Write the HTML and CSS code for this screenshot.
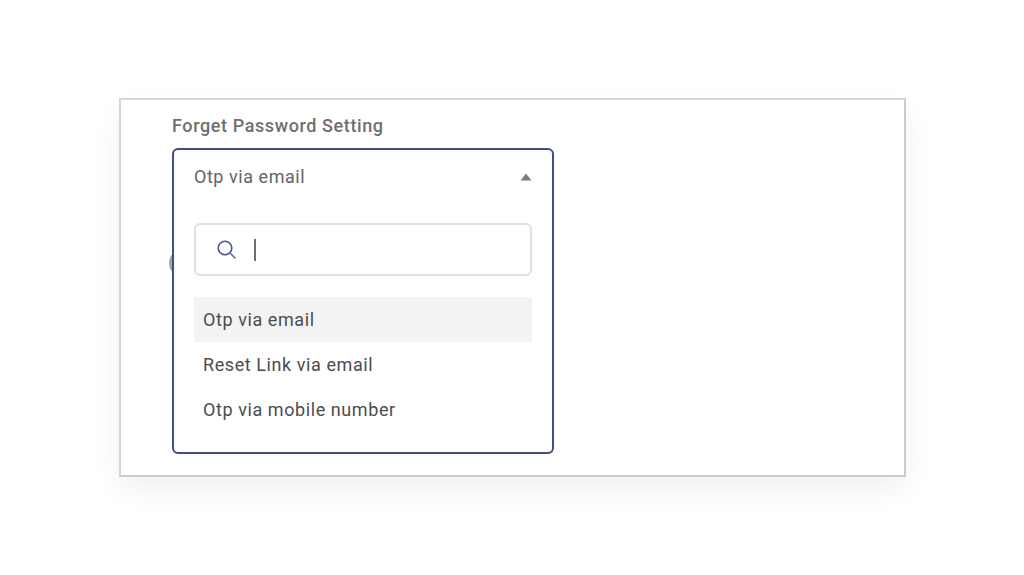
FILE: index.html
```html
<!DOCTYPE html>
<html lang="en">
<head>
<meta charset="utf-8">
<title>Forget Password Setting</title>
<link rel="stylesheet" href="styles.css">
</head>
<body>
<main class="card">
  <label class="label">Forget Password Setting</label>
  <div class="field">
    <span class="peek"></span>
    <div class="dropdown">
      <div class="selected">
        <span>Otp via email</span>
        <svg class="caret" width="12" height="8" viewBox="0 0 12 8"><path d="M6 0.5 L11.5 7.5 H0.5 Z" fill="#7d7d7d"/></svg>
      </div>
      <div class="search">
        <svg class="search-icon" width="22" height="22" viewBox="0 0 22 22" fill="none" stroke="#4a5390" stroke-width="1.6"><circle cx="9" cy="9" r="6.8"/><path d="M14 14 L19.5 19.5" stroke="#6a6f96"/></svg>
        <span class="cursor"></span>
      </div>
      <ul class="options">
        <li class="option active">Otp via email</li>
        <li class="option">Reset Link via email</li>
        <li class="option">Otp via mobile number</li>
      </ul>
    </div>
  </div>
</main>
</body>
</html>
```
FILE: styles.css
```css
* { box-sizing: border-box; }
html, body { margin: 0; height: 100%; background: #fff; overflow: hidden; }
body {
  padding: 98px 0 0 119px;
  font-family: Roboto, "Liberation Sans", sans-serif;
}
.card {
  width: 787px;
  height: 379px;
  border: 2px solid #d6d6d6;
  border-right-color: #cbcbcb;
  border-bottom-color: #cbcbcb;
  background: #fff;
  padding: 14px 0 0 51px;
  box-shadow: 0 12px 26px rgba(0,0,0,0.06);
}
.label {
  display: block;
  font-size: 18px;
  line-height: 24px;
  font-weight: 500;
  letter-spacing: 0.6px;
  color: #6f6f6f;
  margin-bottom: 10px;
}
.field { position: relative; width: 382px; }
.peek {
  position: absolute;
  left: -3px;
  top: 105px;
  width: 12px;
  height: 20px;
  border-radius: 50%;
  background: #a4a4a4;
}
.dropdown {
  position: relative;
  height: 306px;
  border: 2px solid #414c88;
  border-radius: 6px;
  background: #fff;
  padding: 0 20px;
}
.selected {
  height: 52px;
  display: flex;
  align-items: center;
  justify-content: space-between;
  font-size: 18px;
  letter-spacing: 0.55px;
  color: #646464;
}
.caret { margin-top: 2px; }
.search {
  margin-top: 21px;
  height: 53px;
  border: 2px solid #e0e0e0;
  border-radius: 6px;
  display: flex;
  align-items: center;
  padding-left: 20px;
}
.search-icon { margin-right: 16px; }
.cursor { width: 2px; height: 22px; background: #6e6e6e; }
.options { list-style: none; margin: 21px 0 0; padding: 0; }
.option {
  height: 45px;
  display: flex;
  align-items: center;
  padding-left: 9px;
  font-size: 18px;
  letter-spacing: 0.58px;
  color: #4c4c4c;
}
.option.active { background: #f3f3f3; }
```
